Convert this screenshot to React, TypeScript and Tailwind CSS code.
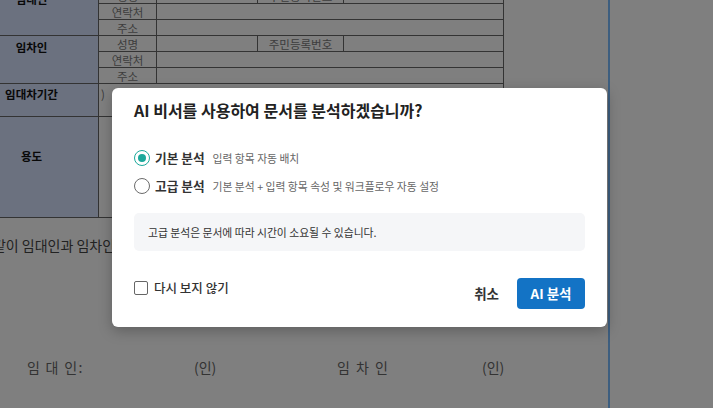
import { useState } from 'react';

const line = 'border border-[#666666]';
const headCell = `${line} bg-[#d6e2fe] text-center align-top text-[11.5px] font-semibold leading-[16px] text-[#111111]`;
const subCell = `${line} text-center align-middle text-[11.5px] leading-[14px] text-[#7a7a7a]`;

function PartyRows({ title }: { title: string }) {
  return (
    <>
      <tr className="h-[16px]">
        <td rowSpan={3} className={`${headCell} pt-[3px]`}>
          {title}
        </td>
        <td className={subCell}>성명</td>
        <td className={line}></td>
        <td className={subCell}>주민등록번호</td>
        <td className={line}></td>
      </tr>
      <tr className="h-[16px]">
        <td className={subCell}>연락처</td>
        <td colSpan={3} className={line}></td>
      </tr>
      <tr className="h-[16px]">
        <td className={subCell}>주소</td>
        <td colSpan={3} className={line}></td>
      </tr>
    </>
  );
}

function Document() {
  return (
    <div className="w-[608px] shrink-0 overflow-hidden bg-white">
      <div className="ml-[-36px] mt-[-13px]">
        <table className="w-[539px] table-fixed border-collapse">
          <colgroup>
            <col className="w-[134px]" />
            <col className="w-[58px]" />
            <col className="w-[101px]" />
            <col className="w-[86px]" />
            <col className="w-[160px]" />
          </colgroup>
          <tbody>
            <PartyRows title="임대인" />
            <PartyRows title="임차인" />
            <tr className="h-[33px]">
              <td className={`${headCell} pt-[2px]`}>임대차기간</td>
              <td colSpan={4} className={`${line} align-top pt-[2px] pl-[2px] text-[11.5px] leading-[16px] text-[#777777]`}>
                )
              </td>
            </tr>
            <tr className="h-[101px]">
              <td className={`${headCell} pt-[31px]`}>용도</td>
              <td colSpan={4} className={line}></td>
            </tr>
          </tbody>
        </table>

        <p className="mt-[17px] whitespace-nowrap text-[14px] leading-[20px] text-[#444444]">
          위와 같이 임대인과 임차인은 아래와 같이 계약을 체결하고 각 1통씩 보관한다.
        </p>

        <div className="mt-[102px] flex whitespace-pre pl-[63px] text-[14px] leading-[20px] text-[#666666]">
          <span className="w-[167px] tracking-[1.3px]">임 대 인:</span>
          <span className="w-[143px]">(인)</span>
          <span className="w-[145px] tracking-[1.5px]">임 차 인</span>
          <span>(인)</span>
        </div>
      </div>
    </div>
  );
}

function Radio({ checked, label, desc, onSelect }: { checked: boolean; label: string; desc: string; onSelect: () => void }) {
  return (
    <button type="button" onClick={onSelect} className="flex h-[20px] items-center text-left">
      <span
        className={`flex h-[16px] w-[16px] items-center justify-center rounded-full border-[1.5px] ${
          checked ? 'border-[#1ba89b]' : 'border-[#6b6b6b]'
        }`}
      >
        {checked && <span className="h-[8px] w-[8px] rounded-full bg-[#1ba89b]" />}
      </span>
      <span className="ml-[5px] text-[12.7px] font-bold text-[#333333]">{label}</span>
      <span className="ml-[8px] text-[10.8px] text-[#666666]">{desc}</span>
    </button>
  );
}

function AnalyzeDialog() {
  const [mode, setMode] = useState<'basic' | 'advanced'>('basic');
  const [dontShow, setDontShow] = useState(false);

  return (
    <div className="w-[495px] rounded-[6px] bg-white px-[22px] pt-[12px] pb-[18px] shadow-[0_4px_14px_rgba(0,0,0,0.25)]">
      <h2 className="text-[16px] font-semibold leading-[20px] text-[#222222]">
        AI 비서를 사용하여 문서를 분석하겠습니까?
      </h2>

      <div className="mt-[28px] flex flex-col gap-[8px]">
        <Radio checked={mode === 'basic'} label="기본 분석" desc="입력 항목 자동 배치" onSelect={() => setMode('basic')} />
        <Radio
          checked={mode === 'advanced'}
          label="고급 분석"
          desc="기본 분석 + 입력 항목 속성 및 워크플로우 자동 설정"
          onSelect={() => setMode('advanced')}
        />
      </div>

      <div className="mt-[17px] flex h-[38px] items-center rounded-[5px] bg-[#f5f6f8] pl-[14px] text-[10.8px] text-[#333333]">
        고급 분석은 문서에 따라 시간이 소요될 수 있습니다.
      </div>

      <div className="mt-[27px] flex items-start justify-between">
        <label className="flex h-[20px] cursor-pointer items-center gap-[6px]">
          <input
            type="checkbox"
            checked={dontShow}
            onChange={() => setDontShow(!dontShow)}
            className="h-[14px] w-[14px] appearance-none rounded-[2px] border border-[#666666] bg-white"
          />
          <span className="text-[12.5px] font-medium text-[#333333]">다시 보지 않기</span>
        </label>

        <div className="flex items-center gap-[6px]">
          <button type="button" className="px-[12px] text-[13.5px] font-semibold text-[#333333]">
            취소
          </button>
          <button
            type="button"
            className="flex h-[31px] w-[68px] items-center justify-center rounded-[4px] bg-[#1373c5] text-[13.5px] font-bold text-white"
          >
            AI 분석
          </button>
        </div>
      </div>
    </div>
  );
}

export default function App() {
  return (
    <div className="relative flex h-[408px] w-[713px] overflow-hidden bg-[#fefefe] font-['Noto_Sans_CJK_KR','Noto_Sans',sans-serif]">
      <Document />
      <div className="w-[2px] shrink-0 bg-[#7bbdff]" />
      <div className="flex-1 bg-[#fefefe]" />

      <div className="absolute inset-0 flex items-center justify-center bg-black/50 pl-[6px] pt-[7px]">
        <AnalyzeDialog />
      </div>
    </div>
  );
}
